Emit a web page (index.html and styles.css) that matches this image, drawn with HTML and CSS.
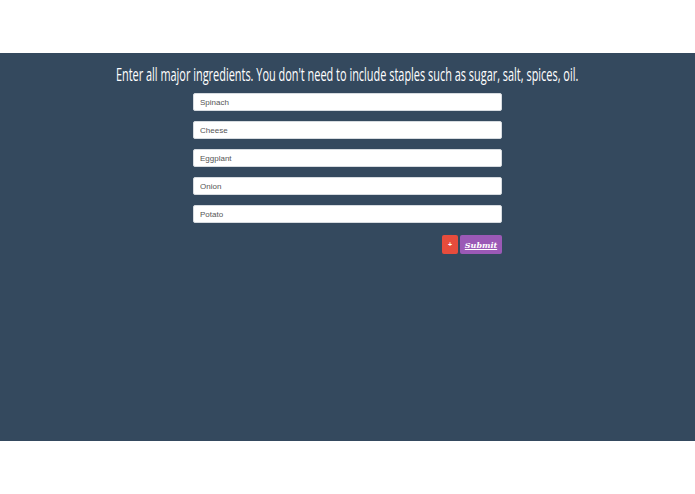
FILE: index.html
```html
<!DOCTYPE html>
<html>
<head>
<meta charset="utf-8">
<link rel="stylesheet" href="styles.css">
</head>
<body>
<div class="top"></div>
<main class="panel">
  <h1 class="title"><span class="title-text">Enter all major ingredients. You don't need to include staples such as sugar, salt, spices, oil.</span></h1>
  <form class="form">
    <input class="field" type="text" value="Spinach">
    <input class="field" type="text" value="Cheese">
    <input class="field" type="text" value="Eggplant">
    <input class="field" type="text" value="Onion">
    <input class="field" type="text" value="Potato">
    <div class="actions">
      <button type="button" class="btn btn-add">+</button>
      <button type="button" class="btn btn-submit">Submit</button>
    </div>
  </form>
</main>
</body>
</html>
```
FILE: styles.css
```css
html, body {
  margin: 0;
  padding: 0;
  background: #ffffff;
}
.top {
  height: 53px;
}
.panel {
  background: #34495e;
  height: 388px;
  box-sizing: border-box;
  padding-top: 9px;
  overflow: hidden;
}
.title {
  margin: 0;
  display: flex;
  justify-content: center;
  color: #ffffff;
  font-family: "Open Sans", sans-serif;
  font-weight: 400;
  font-size: 19px;
  line-height: 24px;
  height: 24px;
}
.title-text {
  display: inline-block;
  white-space: nowrap;
  flex: none;
  transform: scaleX(0.575);
  transform-origin: center;
}
.form {
  width: 309px;
  margin: 7px auto 0;
  display: flex;
  flex-direction: column;
  gap: 10px;
}
.field {
  box-sizing: border-box;
  height: 18px;
  width: 100%;
  margin: 0;
  border: 1px solid #d6dbe0;
  border-radius: 2px;
  background: #ffffff;
  padding: 0 6px;
  font-family: "Liberation Sans", Arial, sans-serif;
  font-size: 8px;
  color: #555555;
  outline: none;
}
.actions {
  display: flex;
  justify-content: flex-end;
  gap: 2px;
  margin-top: 2px;
}
.btn {
  height: 19px;
  border: none;
  border-radius: 2px;
  color: #ffffff;
  margin: 0;
  padding: 0;
  cursor: pointer;
}
.btn-add {
  width: 16px;
  background: #e74c3c;
  font-family: "Liberation Sans", Arial, sans-serif;
  font-size: 7px;
  font-weight: 700;
}
.btn-submit {
  width: 42px;
  background: #9b59b6;
  font-family: "DejaVu Serif", serif;
  font-style: italic;
  font-weight: 700;
  font-size: 8px;
  text-decoration: underline;
}
```
